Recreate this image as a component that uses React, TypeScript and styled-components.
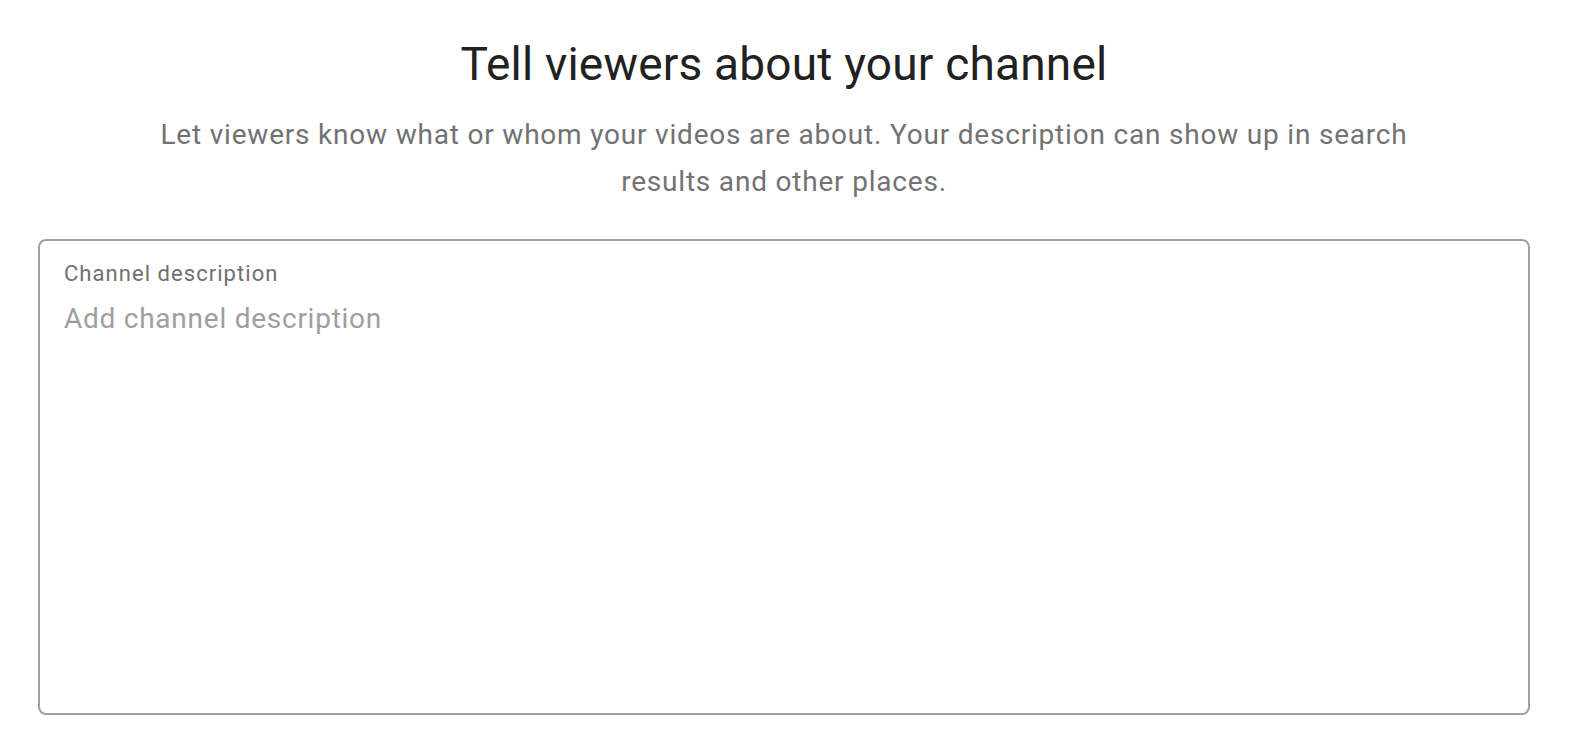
import React from "react";
import styled, { createGlobalStyle } from "styled-components";

const Global = createGlobalStyle`
  html, body { margin: 0; padding: 0; background: #ffffff; }
  body { font-family: Roboto, "Noto Sans", Arial, sans-serif; }
`;

const Page = styled.div`
  display: flex;
  flex-direction: column;
  align-items: center;
  padding: 34px 50px 0 38px;
`;

const Title = styled.h1`
  margin: 0;
  font-size: 46px;
  font-weight: 400;
  line-height: 60px;
  color: #212121;
  letter-spacing: 0.2px;
`;

const Subtitle = styled.p`
  margin: 17px 0 0;
  width: 1300px;
  text-align: center;
  font-size: 28px;
  line-height: 47px;
  letter-spacing: 0.8px;
  color: #727272;
`;

const Field = styled.label`
  margin-top: 34px;
  align-self: stretch;
  height: 476px;
  box-sizing: border-box;
  border: 2px solid #a0a0a0;
  border-radius: 8px;
  padding: 19px 24px;
  display: flex;
  flex-direction: column;
`;

const Label = styled.span`
  font-size: 22px;
  line-height: 28px;
  letter-spacing: 1.05px;
  color: #6f6f6f;
`;

const Area = styled.textarea`
  margin-top: 13px;
  flex: 1;
  border: none;
  outline: none;
  resize: none;
  padding: 0;
  font-family: Roboto, "Noto Sans", Arial, sans-serif;
  font-size: 28px;
  line-height: 36px;
  letter-spacing: 0.75px;
  color: #212121;
  &::placeholder { color: #9e9e9e; }
`;

export default function App() {
  return (
    <>
      <Global />
      <Page>
        <Title>Tell viewers about your channel</Title>
        <Subtitle>
          Let viewers know what or whom your videos are about. Your description can show up in search results and other places.
        </Subtitle>
        <Field>
          <Label>Channel description</Label>
          <Area placeholder="Add channel description" />
        </Field>
      </Page>
    </>
  );
}
